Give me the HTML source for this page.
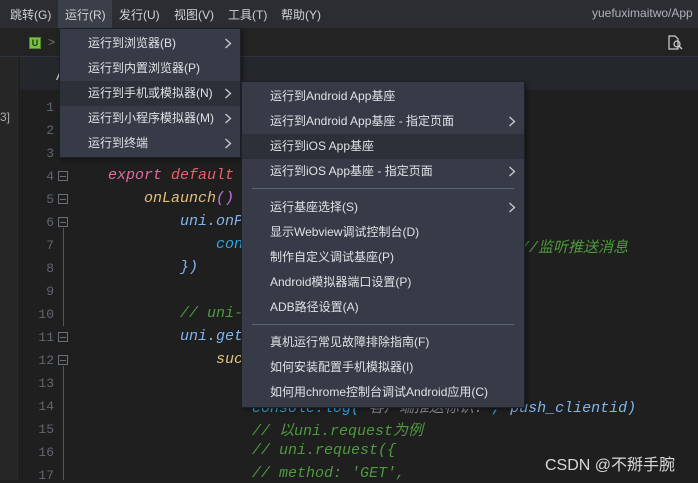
<!DOCTYPE html>
<html><head><meta charset="utf-8"><style>
*{margin:0;padding:0;box-sizing:border-box}
body{width:698px;height:480px;overflow:hidden;background:#1f1f1f;font-family:"Liberation Sans","Noto Sans CJK SC",sans-serif;position:relative;color:#d0d3d8}
.abs{position:absolute;white-space:nowrap}
#mb{left:0;top:0;width:698px;height:28px;background:#2b2d32}
.mi{top:6px;font-size:12px;color:#cfd2d6}
#tb{left:0;top:28px;width:698px;height:29px;background:#232323;border-bottom:1px solid #2e3340}
#hd{left:20px;top:57px;width:678px;height:33px;background:#24272c}
.ln{font-family:"Liberation Mono",monospace;font-size:13px;color:#62666e;width:36px;text-align:right;left:18px}
.fold{left:58px;width:10px;height:10px;border:1px solid #6a6f78}
.fold:after{content:"";position:absolute;left:1px;top:3.5px;width:6px;height:1px;background:#6a6f78}
.code{font-family:"Liberation Mono",monospace;font-size:15px;font-style:italic}
.menu{background:#363b47;border:1px solid #1d2026;box-shadow:2px 2px 4px rgba(0,0,0,.4)}
.it{font-size:12px;color:#dfe2e6;height:25px;line-height:25px;position:absolute;left:0;right:0;padding-left:28px}
.arr{position:absolute;right:8px;top:7px;width:8px;height:11px}
.sep{position:absolute;left:10px;right:10px;height:1px;background:#5c626e}
</style></head><body>
<div class="abs" id="mb"></div>
<div class="abs" style="left:58px;top:0;width:54px;height:28px;background:#3a3f4a"></div>
<span class="abs mi" style="left:10px">跳转(G)</span>
<span class="abs mi" style="left:65px">运行(R)</span>
<span class="abs mi" style="left:119px">发行(U)</span>
<span class="abs mi" style="left:174px">视图(V)</span>
<span class="abs mi" style="left:228px">工具(T)</span>
<span class="abs mi" style="left:281px">帮助(Y)</span>
<span class="abs mi" style="left:592px;color:#aeb2b8">yuefuximaitwo/App</span>
<div class="abs" id="tb"></div>
<div class="abs" style="left:29px;top:37px;width:12px;height:12px;background:#7ac143;border:1px solid #4f8a2a;font-size:9px;line-height:10px;text-align:center;color:#1d3b0c;font-weight:bold">U</div>
<span class="abs" style="left:48px;top:35px;font-size:12px;color:#777">&gt;</span>
<svg class="abs" style="left:667px;top:35px" width="18" height="16" viewBox="0 0 18 16"><path d="M2 1h6l3 3v10H2z" fill="none" stroke="#d0d0d0" stroke-width="1.2"/><circle cx="10" cy="9" r="3" fill="none" stroke="#d0d0d0" stroke-width="1.2"/><path d="M12 11l3 3" stroke="#d0d0d0" stroke-width="1.4"/></svg>
<div class="abs" id="hd"></div>
<div class="abs" style="left:0;top:57px;width:18px;height:423px;background:#262626;border-right:1px solid #2c2c2c"></div>
<span class="abs" style="left:0;top:110px;font-size:12px;color:#aaa">3]</span>
<span class="abs" style="left:56px;top:68px;font-size:13px;color:#ccc">A</span>
<span class="abs ln" style="top:100px">1</span>
<span class="abs ln" style="top:123px">2</span>
<span class="abs ln" style="top:146px">3</span>
<span class="abs ln" style="top:169px">4</span>
<span class="abs ln" style="top:192px">5</span>
<span class="abs ln" style="top:215px">6</span>
<span class="abs ln" style="top:238px">7</span>
<span class="abs ln" style="top:261px">8</span>
<span class="abs ln" style="top:284px">9</span>
<span class="abs ln" style="top:307px">10</span>
<span class="abs ln" style="top:330px">11</span>
<span class="abs ln" style="top:353px">12</span>
<span class="abs ln" style="top:376px">13</span>
<span class="abs ln" style="top:399px">14</span>
<span class="abs ln" style="top:422px">15</span>
<span class="abs ln" style="top:445px">16</span>
<span class="abs ln" style="top:468px">17</span>
<div class="abs fold" style="top:171px"></div>
<div class="abs fold" style="top:194px"></div>
<div class="abs fold" style="top:217px"></div>
<div class="abs fold" style="top:332px"></div>
<div class="abs fold" style="top:355px"></div>
<div class="abs" style="left:63px;top:228px;width:1px;height:98px;background:#555"></div>
<div class="abs" style="left:63px;top:366px;width:1px;height:114px;background:#555"></div>
<span class="abs code" style="left:108px;top:167px;color:#e06c9f">export <span style="color:#e8606a">default</span></span>
<span class="abs code" style="left:144px;top:190px;color:#e5c07b">onLaunch<span style="color:#c678dd">()</span></span>
<span class="abs code" style="left:180px;top:213px;color:#7fb6f0">uni.onP</span>
<span class="abs code" style="left:216px;top:236px;color:#2fa8e0">con</span>
<span class="abs code" style="left:180px;top:259px;color:#7fb6f0">})</span>
<span class="abs code" style="left:180px;top:305px;color:#4e9a3e">// uni-</span>
<span class="abs code" style="left:180px;top:328px;color:#7fb6f0">uni.get</span>
<span class="abs code" style="left:216px;top:351px;color:#e5c07b">suc</span>
<span class="abs code" style="left:520px;top:236px;color:#4e9a3e">//监听推送消息</span>
<span class="abs code" style="left:252px;top:396px;color:#2fa8e0">console.log(<span style="color:#8a8f99">'客户端推送标识:'</span>, <span style="color:#7fb6f0">push_clientid)</span></span>
<span class="abs code" style="left:252px;top:419px;color:#4e9a3e">// 以uni.request为例</span>
<span class="abs code" style="left:252px;top:442px;color:#4e9a3e">// uni.request({</span>
<span class="abs code" style="left:252px;top:465px;color:#4e9a3e">//  method: 'GET',</span>

<div class="abs menu" style="left:59px;top:28px;width:182px;height:130px">
<div class="it" style="top:2px">运行到浏览器(B)<svg class="arr" viewBox="0 0 8 11"><path d="M1.5 1l5 4.5-5 4.5" fill="none" stroke="#c8ccd2" stroke-width="1.3"/></svg></div>
<div class="it" style="top:27px">运行到内置浏览器(P)</div>
<div class="it" style="top:52px;background:#2c3039">运行到手机或模拟器(N)<svg class="arr" viewBox="0 0 8 11"><path d="M1.5 1l5 4.5-5 4.5" fill="none" stroke="#c8ccd2" stroke-width="1.3"/></svg></div>
<div class="it" style="top:77px">运行到小程序模拟器(M)<svg class="arr" viewBox="0 0 8 11"><path d="M1.5 1l5 4.5-5 4.5" fill="none" stroke="#c8ccd2" stroke-width="1.3"/></svg></div>
<div class="it" style="top:102px">运行到终端<svg class="arr" viewBox="0 0 8 11"><path d="M1.5 1l5 4.5-5 4.5" fill="none" stroke="#c8ccd2" stroke-width="1.3"/></svg></div>
</div>
<div class="abs menu" style="left:241px;top:81px;width:284px;height:327px">
<div class="it" style="top:2px">运行到Android App基座</div>
<div class="it" style="top:27px">运行到Android App基座 - 指定页面<svg class="arr" viewBox="0 0 8 11"><path d="M1.5 1l5 4.5-5 4.5" fill="none" stroke="#c8ccd2" stroke-width="1.3"/></svg></div>
<div class="it" style="top:52px;background:#2c3039">运行到iOS App基座</div>
<div class="it" style="top:77px">运行到iOS App基座 - 指定页面<svg class="arr" viewBox="0 0 8 11"><path d="M1.5 1l5 4.5-5 4.5" fill="none" stroke="#c8ccd2" stroke-width="1.3"/></svg></div>
<div class="sep" style="top:106px"></div>
<div class="it" style="top:113px">运行基座选择(S)<svg class="arr" viewBox="0 0 8 11"><path d="M1.5 1l5 4.5-5 4.5" fill="none" stroke="#c8ccd2" stroke-width="1.3"/></svg></div>
<div class="it" style="top:138px">显示Webview调试控制台(D)</div>
<div class="it" style="top:163px">制作自定义调试基座(P)</div>
<div class="it" style="top:188px">Android模拟器端口设置(P)</div>
<div class="it" style="top:213px">ADB路径设置(A)</div>
<div class="sep" style="top:242px"></div>
<div class="it" style="top:248px">真机运行常见故障排除指南(F)</div>
<div class="it" style="top:273px">如何安装配置手机模拟器(I)</div>
<div class="it" style="top:298px">如何用chrome控制台调试Android应用(C)</div>
</div>
<span class="abs" style="left:545px;top:451px;font-size:16px;color:#d8d8d8">CSDN @不掰手腕</span>
</body></html>
